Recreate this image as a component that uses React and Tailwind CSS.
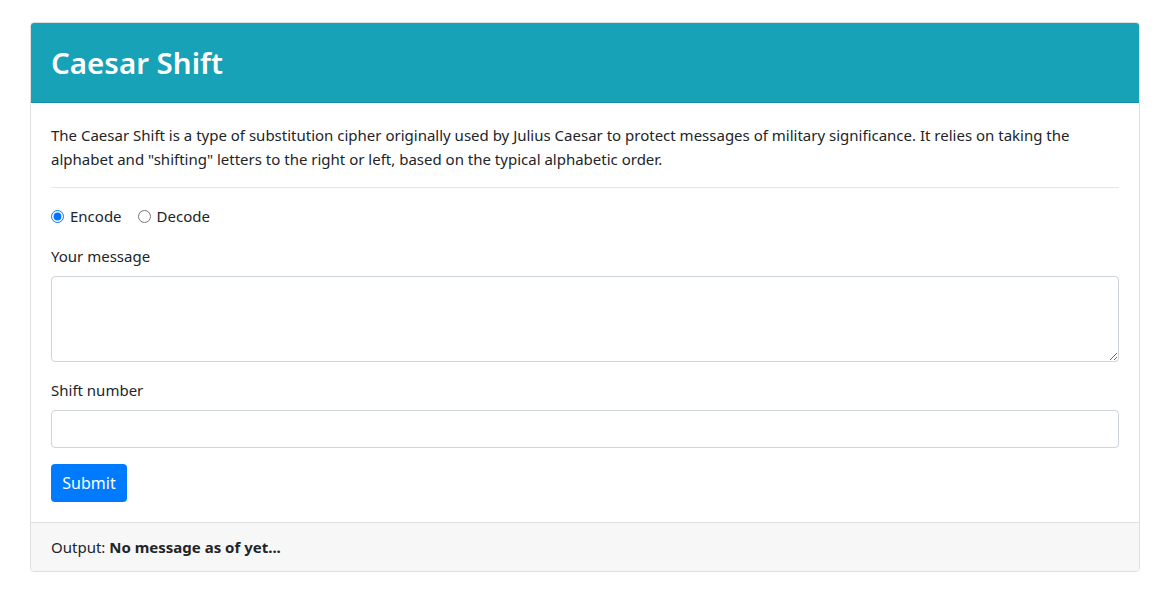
import { useState } from 'react'

export default function App() {
  const [mode, setMode] = useState('encode')
  const [message, setMessage] = useState('')
  const [shift, setShift] = useState('')

  return (
    <div className="min-h-screen w-full bg-white pt-[22px] px-[30px] text-[#212529] font-['Noto_Sans',sans-serif] text-[15px] leading-6">
      <div className="w-[1110px] rounded-[4px] border border-[#dfdfdf] overflow-hidden">
        {/* Header */}
        <div className="h-[80px] bg-[#17a2b8] border-b border-[#1590a4] px-5 flex items-center">
          <h2 className="text-white text-[29.5px] font-semibold leading-none">Caesar Shift</h2>
        </div>

        {/* Body */}
        <div className="p-5">
          <p>
            The Caesar Shift is a type of substitution cipher originally used by Julius Caesar to protect messages of military significance. It relies on taking the alphabet and "shifting" letters to the right or left, based on the typical alphabetic order.
          </p>
          <hr className="my-4 border-t border-[#e5e5e5]" />

          <div className="flex items-center gap-4">
            <label className="flex items-center gap-[6px]">
              <input
                type="radio"
                name="mode"
                checked={mode === 'encode'}
                onChange={() => setMode('encode')}
                className="w-[13px] h-[13px] accent-[#0075ff] m-0"
              />
              Encode
            </label>
            <label className="flex items-center gap-[6px]">
              <input
                type="radio"
                name="mode"
                checked={mode === 'decode'}
                onChange={() => setMode('decode')}
                className="w-[13px] h-[13px] accent-[#0075ff] m-0"
              />
              Decode
            </label>
          </div>

          <div className="mt-4">
            <label className="block mb-2">Your message</label>
            <textarea
              value={message}
              onChange={(e) => setMessage(e.target.value)}
              rows={3}
              className="block w-full h-[86px] rounded-[4px] border border-[#ced4da] px-3 py-[6px] outline-none"
            />
          </div>

          <div className="mt-4">
            <label className="block mb-2">Shift number</label>
            <input
              type="text"
              value={shift}
              onChange={(e) => setShift(e.target.value)}
              className="block w-full h-[38px] rounded-[4px] border border-[#ced4da] px-3 outline-none"
            />
          </div>

          <button className="mt-4 h-[38px] w-[76px] rounded-[4px] bg-[#007bff] text-white text-[16px]">Submit</button>
        </div>

        {/* Footer */}
        <div className="bg-[#f7f7f7] border-t border-[#dfdfdf] px-5 py-3">
          Output: <b className="font-bold">No message as of yet...</b>
        </div>
      </div>
    </div>
  )
}
